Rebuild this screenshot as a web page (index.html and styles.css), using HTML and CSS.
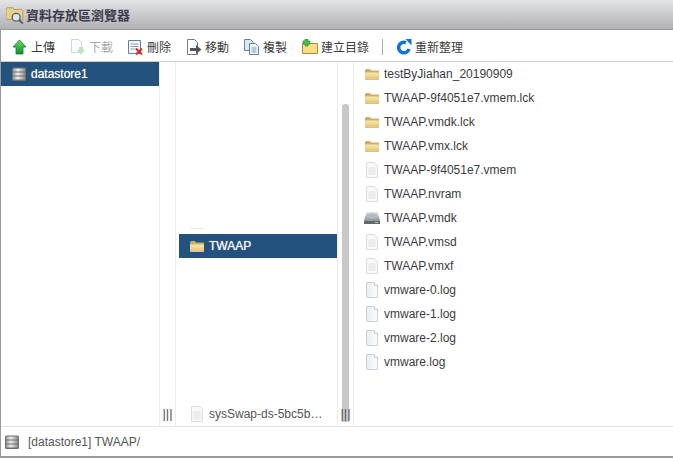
FILE: index.html

```html
<!DOCTYPE html>
<html lang="zh-TW">
<head>
  <meta charset="UTF-8" />
  <title>資料存放區瀏覽器</title>
  <link rel="stylesheet" href="styles.css">
</head>
<body>
<svg class="defs" width="0" height="0">
  <defs>
    <linearGradient id="gFolder" x1="0" y1="0" x2="0" y2="1">
      <stop offset="0" stop-color="#f8eab0"/>
      <stop offset="1" stop-color="#dfc26c"/>
    </linearGradient>
    <linearGradient id="gDisk" x1="0" y1="0" x2="0" y2="1">
      <stop offset="0" stop-color="#e2e6e9"/>
      <stop offset="1" stop-color="#8f979c"/>
    </linearGradient>
    <linearGradient id="gBand" x1="0" y1="0" x2="1" y2="0">
      <stop offset="0" stop-color="#9a9a9a"/>
      <stop offset=".4" stop-color="#efefef"/>
      <stop offset="1" stop-color="#8c8c8c"/>
    </linearGradient>
    <linearGradient id="gLog" x1="0" y1="0" x2="1" y2="0">
      <stop offset="0" stop-color="#e6edf3"/>
      <stop offset="1" stop-color="#fbfcfe"/>
    </linearGradient>
    <linearGradient id="gUp" x1="0" y1="0" x2="0" y2="1">
      <stop offset="0" stop-color="#6fdc62"/>
      <stop offset="1" stop-color="#0c8f2c"/>
    </linearGradient>
    <symbol id="folder" viewBox="0 0 16 16">
      <path d="M1 4.500 2 3h4l1 1.500h7.500l.5 1V14H1z" fill="#c9ad63"/>
      <path d="M1 6.500h14V13.500l-.5.500h-13L1 13.500z" fill="url(#gFolder)"/>
    </symbol>
    <symbol id="file" viewBox="0 0 16 16">
      <path d="M2.500.5h8l3 3v12h-11z" fill="#f8f8f8" stroke="#dedede"/>
      <path d="M4.500 5.500h7v1h-7zM4.500 7.500h7v1h-7zM4.500 9.500h7v1h-7zM4.500 11.500h7v1h-7z" fill="#e0e0e0"/>
    </symbol>
    <symbol id="log" viewBox="0 0 16 16">
      <path d="M2.500.5h8l3 3v12h-11z" fill="url(#gLog)" stroke="#c9d2da"/>
      <path d="M10.500.5v3h3" fill="#fff" stroke="#c3ccd5"/>
    </symbol>
    <symbol id="disk" viewBox="0 0 16 16">
      <path d="M2.500 2h11L16 10.500H0z" fill="url(#gDisk)"/>
      <ellipse cx="8" cy="6" rx="5.500" ry="2.500" fill="#b4bbc0"/>
      <path d="M0 10.500h16V14H0z" fill="#626a70"/>
      <path d="M11 12.500h3" stroke="#9fd08a"/>
    </symbol>
    <symbol id="store" viewBox="0 0 16 16">
      <path d="M2 1.500h12l1 1V14l-1 1H2l-1-1V2.500z" fill="#6f6f6f"/>
      <path d="M2 2.500h12v3H2zM2 6.500h12v3H2zM2 10.500h12v3H2z" fill="url(#gBand)"/>
    </symbol>
  </defs>
</svg>

<div class="window">
  <div class="titlebar">
    <svg class="title-icon" viewBox="0 0 16 16" width="18" height="18">
      <path d="M0 3 1 1.500h5L7 3h7l1 1v8H1l-1-1z" fill="#e8d08c" stroke="#a9853f" stroke-width=".6"/>
      <circle cx="9" cy="10" r="3.500" fill="#dbe7ef" stroke="#56636d" stroke-width="1.200"/>
      <path d="M11.500 12.500 15 15.500" stroke="#56636d" stroke-width="1.800"/>
    </svg>
    <span class="title-text">資料存放區瀏覽器</span>
  </div>

  <div class="toolbar">
    <div class="tool">
      <svg viewBox="0 0 16 16" width="16" height="16"><path d="M7.500 1 14 8h-3v7H4V8H1z" fill="url(#gUp)" stroke="#157a22" stroke-width=".8"/></svg>
      <span>上傳</span>
    </div>
    <div class="tool disabled">
      <svg viewBox="0 0 16 16" width="16" height="16">
        <path d="M1.500.5h7l3 3v10h-10z" fill="#fafcfe" stroke="#c9d5e2"/>
        <path d="M9 8h4v3h2.500L11 15.500 6.500 11H9z" fill="#bfe3c0"/>
      </svg>
      <span>下載</span>
    </div>
    <div class="tool">
      <svg viewBox="0 0 16 16" width="16" height="16">
        <path d="M.5 1.500h12v13H.5z" fill="#f4f7fa" stroke="#64819e"/>
        <path d="M2.500 5h8M2.500 7.500h8M2.500 10h5" stroke="#8ea3b7"/>
        <path d="M8 9.500l6 6M14 9.500l-6 6" stroke="#dd2a1e" stroke-width="2"/>
      </svg>
      <span>刪除</span>
    </div>
    <div class="tool">
      <svg viewBox="0 0 16 16" width="16" height="16">
        <path d="M1.500.5h7l3 3v12h-10z" fill="#fff" stroke="#7a7a7a"/>
        <path d="M4 9h6V6l5.500 4.500L10 15v-3H4z" fill="#555"/>
      </svg>
      <span>移動</span>
    </div>
    <div class="tool">
      <svg viewBox="0 0 16 16" width="16" height="16">
        <path d="M.5.500h6l3 3v8h-9z" fill="#dfe9f4" stroke="#5d83ac"/>
        <path d="M5.500 4.500h6l3 3v8h-9z" fill="#f3f7fb" stroke="#5d83ac"/>
        <path d="M7.500 9h5M7.500 11h5M7.500 13h5" stroke="#7f9cbb"/>
      </svg>
      <span>複製</span>
    </div>
    <div class="tool">
      <svg viewBox="0 0 16 16" width="16" height="16">
        <path d="M.5 4.500h15v10H.5z" fill="#f7dc8c" stroke="#b58a2c"/>
        <path d="M3 0h3v2h2v3H6v2H3V5H1V2h2z" fill="#3fbf4a" stroke="#1d8a2a" stroke-width=".6"/>
      </svg>
      <span>建立目錄</span>
    </div>
    <div class="tool-sep"></div>
    <div class="tool">
      <svg viewBox="0 0 16 16" width="16" height="16">
        <path d="M13 10A5.300 5.300 0 1 1 10 3.600" fill="none" stroke="#1173d4" stroke-width="3.500"/>
        <path d="M9.500 0h6v6.500z" fill="#1173d4"/>
      </svg>
      <span>重新整理</span>
    </div>
  </div>

  <div class="browser">
    <div class="col col-first">
      <div class="row selected">
        <svg class="icon"><use href="#store"/></svg>
        <span>datastore1</span>
      </div>
    </div>
    <div class="strip"><span class="grip">|||</span></div>
    <div class="col col-mid">
      <div class="clipped-edge"></div>
      <div class="row selected mid-selected">
        <svg class="icon"><use href="#folder"/></svg>
        <span>TWAAP</span>
      </div>
      <div class="row mid-last">
        <svg class="icon"><use href="#file"/></svg>
        <span>sysSwap-ds-5bc5b…</span>
      </div>
    </div>
    <div class="strip strip-scroll">
      <div class="thumb"></div>
      <span class="grip">|||</span>
    </div>
    <div class="col col-files">
      <div class="row"><svg class="icon"><use href="#folder"/></svg><span>testByJiahan_20190909</span></div>
      <div class="row"><svg class="icon"><use href="#folder"/></svg><span>TWAAP-9f4051e7.vmem.lck</span></div>
      <div class="row"><svg class="icon"><use href="#folder"/></svg><span>TWAAP.vmdk.lck</span></div>
      <div class="row"><svg class="icon"><use href="#folder"/></svg><span>TWAAP.vmx.lck</span></div>
      <div class="row"><svg class="icon"><use href="#file"/></svg><span>TWAAP-9f4051e7.vmem</span></div>
      <div class="row"><svg class="icon"><use href="#file"/></svg><span>TWAAP.nvram</span></div>
      <div class="row"><svg class="icon"><use href="#disk"/></svg><span>TWAAP.vmdk</span></div>
      <div class="row"><svg class="icon"><use href="#file"/></svg><span>TWAAP.vmsd</span></div>
      <div class="row"><svg class="icon"><use href="#file"/></svg><span>TWAAP.vmxf</span></div>
      <div class="row"><svg class="icon"><use href="#log"/></svg><span>vmware-0.log</span></div>
      <div class="row"><svg class="icon"><use href="#log"/></svg><span>vmware-1.log</span></div>
      <div class="row"><svg class="icon"><use href="#log"/></svg><span>vmware-2.log</span></div>
      <div class="row"><svg class="icon"><use href="#log"/></svg><span>vmware.log</span></div>
    </div>
  </div>

  <div class="statusbar">
    <svg class="icon"><use href="#store"/></svg>
    <span>[datastore1] TWAAP/</span>
  </div>
</div>
</body>
</html>
```

FILE: styles.css

```css
html, body {
  margin: 0;
  padding: 0;
  height: 100%;
  overflow: hidden;
  background: #fff;
}
.defs {
  position: absolute;
}
.window {
  height: 458px;
  box-sizing: border-box;
  border-left: 1px solid #9a9a9a;
  border-bottom: 2px solid #9a9a9a;
  display: flex;
  flex-direction: column;
  font-family: "Liberation Sans", "Noto Sans CJK TC", sans-serif;
  font-size: 12px;
  color: #3c3c3c;
}
.titlebar {
  height: 29px;
  margin-left: -1px;
  border-bottom: 1px solid #98989c;
  background: linear-gradient(#e3e4e8, #b1b1b5);
  display: flex;
  align-items: center;
  gap: 2px;
  padding-left: 6px;
  flex: none;
}
.title-text {
  font-weight: bold;
  font-size: 13px;
  color: #3a3a4a;
}
.toolbar {
  height: 31px;
  border-bottom: 1px solid #ccc;
  display: flex;
  align-items: center;
  padding-left: 11px;
  gap: 15px;
  flex: none;
}
.tool {
  display: flex;
  align-items: center;
  gap: 3px;
  padding-top: 2px;
}
.tool.disabled {
  color: #aaa;
}
.tool-sep {
  width: 1px;
  height: 16px;
  background: #aaa;
  margin: 2px -2px 0;
}
.browser {
  flex: 1;
  display: flex;
  min-height: 0;
}
.col {
  min-width: 0;
}
.col-first {
  width: 158px;
}
.col-mid {
  width: 161px;
  display: flex;
  flex-direction: column;
  align-items: flex-end;
}
.col-files {
  flex: 1;
  padding-left: 10px;
}
.strip {
  width: 15px;
  border-left: 1px solid #ececec;
  border-right: 1px solid #ececec;
  display: flex;
  flex-direction: column;
  align-items: center;
  justify-content: flex-end;
  padding-bottom: 5px;
  position: relative;
}
.grip {
  font-size: 13px;
  color: #555;
  position: relative;
}
.strip-scroll .thumb {
  position: absolute;
  top: 42px;
  bottom: 4px;
  left: 4px;
  width: 7px;
  border-radius: 3px 3px 0 0;
  background: #c8c8c8;
}
.row {
  height: 24px;
  display: flex;
  align-items: center;
  gap: 4px;
}
.icon {
  width: 16px;
  height: 16px;
  flex: none;
}
.selected {
  background: #24527e;
  color: #fff;
  padding-left: 10px;
  text-shadow: 0 0 1px rgba(255, 255, 255, 0.7);
}
.clipped-edge {
  width: 13px;
  height: 1px;
  margin: 166px 134px 0 0;
  background: #f0ead8;
}
.mid-selected {
  width: 158px;
  box-sizing: border-box;
  margin-top: 5px;
}
.mid-last {
  margin-top: auto;
  width: 158px;
  padding-left: 10px;
  box-sizing: border-box;
  color: #555;
}
.statusbar {
  height: 29px;
  border-top: 1px solid #e4e4e4;
  display: flex;
  align-items: center;
  gap: 8px;
  padding-left: 3px;
  flex: none;
  color: #555;
}
```
